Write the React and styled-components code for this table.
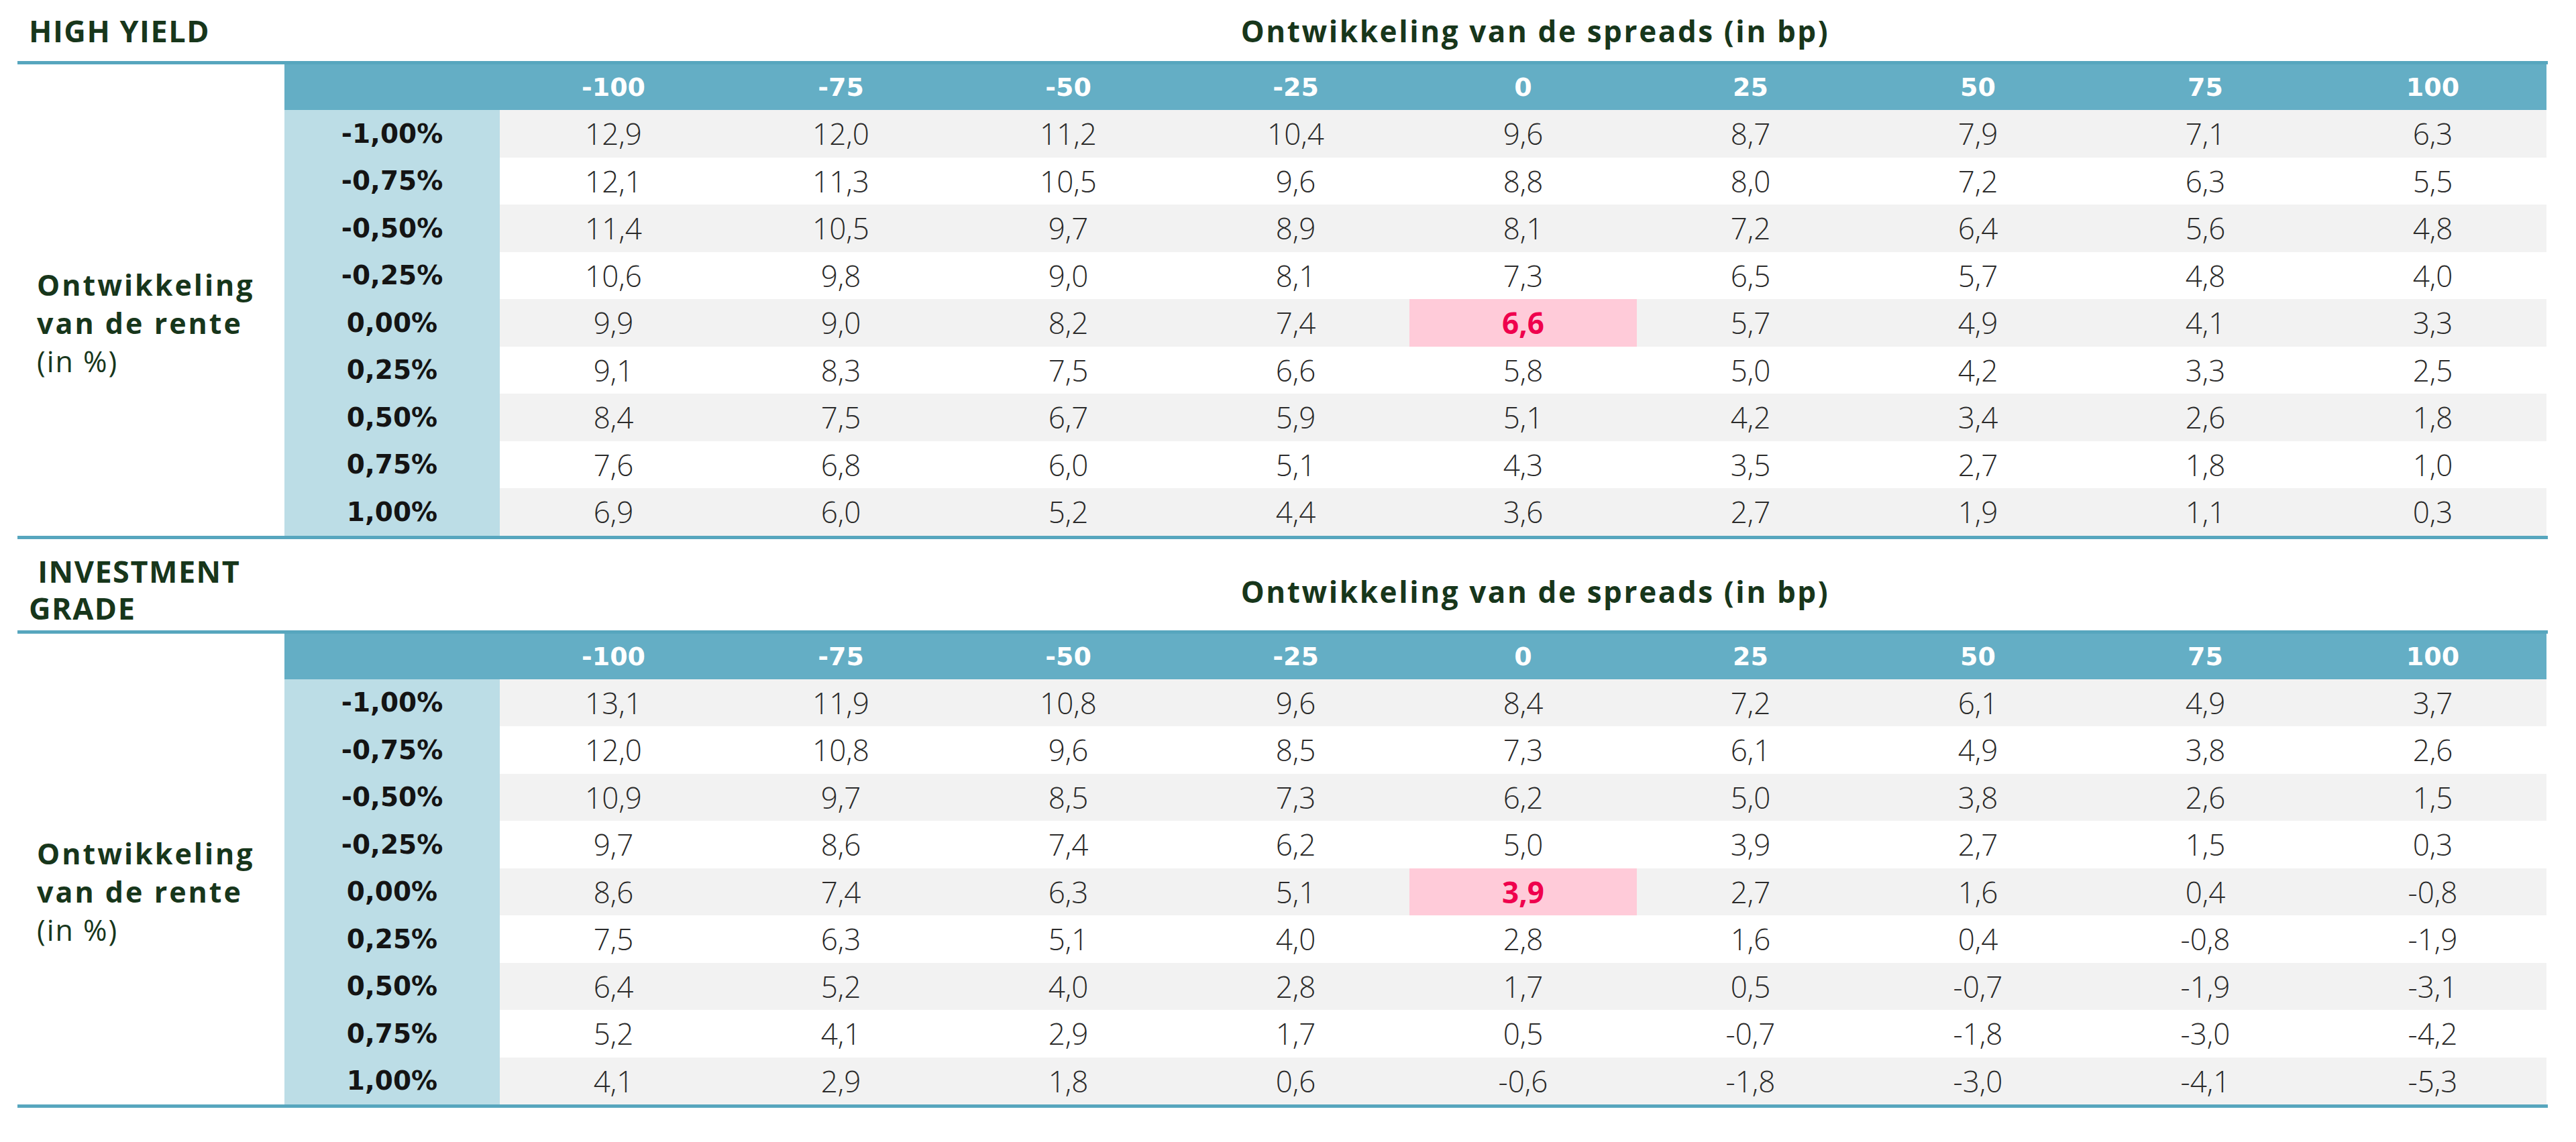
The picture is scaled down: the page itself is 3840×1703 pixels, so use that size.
import React from 'react'
import styled, { createGlobalStyle } from 'styled-components'

const GlobalStyle = createGlobalStyle`
  html, body { margin: 0; padding: 0; background: #ffffff; }
  body { font-family: "Open Sans", "Liberation Sans", sans-serif; }
`

const COLS = '398px 321px repeat(9, 339px)'

const Page = styled.div`
  width: 3772px;
  padding-left: 26px;
`

const TitleBar = styled.div`
  display: grid;
  grid-template-columns: ${COLS};
  align-items: center;
  height: ${p => p.$height}px;
`

const SectionTitle = styled.div`
  grid-column: 1 / 3;
  padding-left: 17px;
  margin-top: ${p => p.$offset || 0}px;
  font-family: "Open Sans", sans-serif;
  font-weight: 700;
  font-size: 45px;
  letter-spacing: 1.5px;
  line-height: 55px;
  color: #17361b;
`

const SpreadsCaption = styled.div`
  grid-column: 3 / -1;
  text-align: center;
  padding-left: 36px;
  font-family: "Open Sans", sans-serif;
  font-weight: 700;
  font-size: 44px;
  letter-spacing: 2.6px;
  color: #17361b;
  margin-top: ${p => p.$offset || 0}px;
`

const Grid = styled.div`
  display: grid;
  grid-template-columns: ${COLS};
  grid-template-rows: 68px repeat(9, 70.5px);
  border-top: 5px solid #57a6be;
  border-bottom: 5px solid #57a6be;
`

const Corner = styled.div`
  background: #ffffff;
`

const HeadCell = styled.div`
  background: #64aec5;
  color: #ffffff;
  display: flex;
  align-items: center;
  justify-content: center;
  font-family: "DejaVu Sans", sans-serif;
  font-weight: 700;
  font-size: 38px;
`

const RateBlock = styled.div`
  grid-column: 1;
  grid-row: 2 / span 9;
  display: flex;
  flex-direction: column;
  justify-content: center;
  padding-left: 29px;
  font-family: "Open Sans", sans-serif;
  font-size: 43px;
  line-height: 57px;
  letter-spacing: 3px;
  color: #17361b;
`

const RateStrong = styled.span`
  font-weight: 700;
`

const RateUnit = styled.span`
  font-weight: 400;
  letter-spacing: 2px;
`

const RowLabel = styled.div`
  grid-column: 2;
  background: #bcdde6;
  display: flex;
  align-items: center;
  justify-content: center;
  font-family: "DejaVu Sans", sans-serif;
  font-weight: 700;
  font-size: 39px;
  color: #141414;
`

const Cell = styled.div`
  display: flex;
  align-items: center;
  justify-content: center;
  background: ${p => (p.$hot ? '#ffcbd9' : p.$stripe ? '#f2f2f2' : '#ffffff')};
  color: ${p => (p.$hot ? '#ef004d' : '#2a2a2a')};
  font-family: "Open Sans", sans-serif;
  font-weight: ${p => (p.$hot ? 700 : 300)};
  font-size: 44px;
`

const spreads = ['-100', '-75', '-50', '-25', '0', '25', '50', '75', '100']
const rates = ['-1,00%', '-0,75%', '-0,50%', '-0,25%', '0,00%', '0,25%', '0,50%', '0,75%', '1,00%']

const highYield = [
  ['12,9', '12,0', '11,2', '10,4', '9,6', '8,7', '7,9', '7,1', '6,3'],
  ['12,1', '11,3', '10,5', '9,6', '8,8', '8,0', '7,2', '6,3', '5,5'],
  ['11,4', '10,5', '9,7', '8,9', '8,1', '7,2', '6,4', '5,6', '4,8'],
  ['10,6', '9,8', '9,0', '8,1', '7,3', '6,5', '5,7', '4,8', '4,0'],
  ['9,9', '9,0', '8,2', '7,4', '6,6', '5,7', '4,9', '4,1', '3,3'],
  ['9,1', '8,3', '7,5', '6,6', '5,8', '5,0', '4,2', '3,3', '2,5'],
  ['8,4', '7,5', '6,7', '5,9', '5,1', '4,2', '3,4', '2,6', '1,8'],
  ['7,6', '6,8', '6,0', '5,1', '4,3', '3,5', '2,7', '1,8', '1,0'],
  ['6,9', '6,0', '5,2', '4,4', '3,6', '2,7', '1,9', '1,1', '0,3'],
]

const investmentGrade = [
  ['13,1', '11,9', '10,8', '9,6', '8,4', '7,2', '6,1', '4,9', '3,7'],
  ['12,0', '10,8', '9,6', '8,5', '7,3', '6,1', '4,9', '3,8', '2,6'],
  ['10,9', '9,7', '8,5', '7,3', '6,2', '5,0', '3,8', '2,6', '1,5'],
  ['9,7', '8,6', '7,4', '6,2', '5,0', '3,9', '2,7', '1,5', '0,3'],
  ['8,6', '7,4', '6,3', '5,1', '3,9', '2,7', '1,6', '0,4', '-0,8'],
  ['7,5', '6,3', '5,1', '4,0', '2,8', '1,6', '0,4', '-0,8', '-1,9'],
  ['6,4', '5,2', '4,0', '2,8', '1,7', '0,5', '-0,7', '-1,9', '-3,1'],
  ['5,2', '4,1', '2,9', '1,7', '0,5', '-0,7', '-1,8', '-3,0', '-4,2'],
  ['4,1', '2,9', '1,8', '0,6', '-0,6', '-1,8', '-3,0', '-4,1', '-5,3'],
]

const Section = ({ title, titleHeight, titleOffset, captionOffset, data }) => (
  <>
    <TitleBar $height={titleHeight}>
      <SectionTitle $offset={titleOffset}>{title}</SectionTitle>
      <SpreadsCaption $offset={captionOffset}>Ontwikkeling van de spreads (in bp)</SpreadsCaption>
    </TitleBar>
    <Grid>
      <Corner />
      <HeadCell />
      {spreads.map(s => (
        <HeadCell key={s}>{s}</HeadCell>
      ))}
      <RateBlock>
        <RateStrong>Ontwikkeling</RateStrong>
        <RateStrong>van de rente</RateStrong>
        <RateUnit>(in %)</RateUnit>
      </RateBlock>
      {data.map((row, r) => (
        <React.Fragment key={rates[r]}>
          <RowLabel style={{ gridRow: r + 2 }}>{rates[r]}</RowLabel>
          {row.map((v, c) => (
            <Cell key={c} $stripe={r % 2 === 0} $hot={r === 4 && c === 4}>
              {v}
            </Cell>
          ))}
        </React.Fragment>
      ))}
    </Grid>
  </>
)

export default function App() {
  return (
    <Page>
      <GlobalStyle />
      <Section title="HIGH YIELD" titleHeight={91} data={highYield} />
      <Section
        title={<>&nbsp;INVESTMENT<br />GRADE</>}
        titleHeight={136}
        titleOffset={14}
        captionOffset={20}
        data={investmentGrade}
      />
    </Page>
  )
}
